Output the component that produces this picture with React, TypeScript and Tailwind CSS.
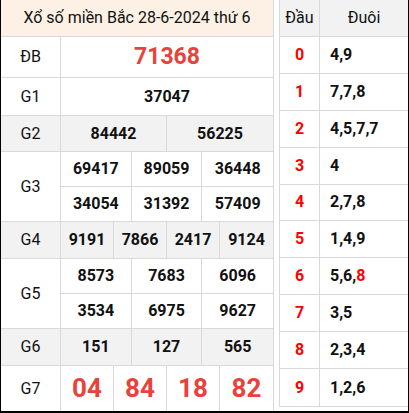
import * as React from 'react';

const RED = 'text-[#e8433a]';

type Row = { label: string; cols: number; values: string[]; h: string; gray?: boolean; big?: 'db' | 'g7' };

const rows: Row[] = [
  { label: 'ĐB', cols: 1, values: ['71368'], h: 'h-[41px]', big: 'db' },
  { label: 'G1', cols: 1, values: ['37047'], h: 'h-[38px]' },
  { label: 'G2', cols: 2, values: ['84442', '56225'], h: 'h-[36px]', gray: true },
  { label: 'G3', cols: 3, values: ['69417', '89059', '36448', '34054', '31392', '57409'], h: 'h-[70px]' },
  { label: 'G4', cols: 4, values: ['9191', '7866', '2417', '9124'], h: 'h-[37px]', gray: true },
  { label: 'G5', cols: 3, values: ['8573', '7683', '6096', '3534', '6975', '9627'], h: 'h-[70px]' },
  { label: 'G6', cols: 3, values: ['151', '127', '565'], h: 'h-[37px]', gray: true },
  { label: 'G7', cols: 4, values: ['04', '84', '18', '82'], h: 'h-[45px]', big: 'g7' },
];

const gridCols: Record<number, string> = {
  1: 'grid-cols-1',
  2: 'grid-cols-2',
  3: 'grid-cols-3',
  4: 'grid-cols-4',
};

const loto: { d: string; t: React.ReactNode }[] = [
  { d: '0', t: '4,9' },
  { d: '1', t: '7,7,8' },
  { d: '2', t: '4,5,7,7' },
  { d: '3', t: '4' },
  { d: '4', t: '2,7,8' },
  { d: '5', t: '1,4,9' },
  { d: '6', t: <>5,6,<span className="text-[#ff0000]">8</span></> },
  { d: '7', t: '3,5' },
  { d: '8', t: '2,3,4' },
  { d: '9', t: '1,2,6' },
];

export default function App() {
  return (
    <div className="w-[409px] h-[413px] bg-white border-l border-r border-b-2 border-black flex font-['Roboto',sans-serif] text-[#111]">
      {/* ket qua */}
      <div className="w-[273px] h-[411px] border-r border-[#d9d9d9] flex flex-col">
        <div className="h-[37px] bg-[#fdf1e5] border-b border-[#d9d9d9] flex items-center justify-center text-[16px]">
          Xổ số miền Bắc 28-6-2024 thứ 6
        </div>
        {rows.map((r, i) => (
          <div
            key={r.label}
            className={`${r.h} flex ${i < rows.length - 1 ? 'border-b border-[#d9d9d9]' : ''} ${r.gray ? 'bg-[#f2f2f2]' : ''}`}
          >
            <div className="w-[60px] border-r border-[#d9d9d9] flex items-center justify-center text-[16px]">
              {r.label}
            </div>
            <div className={`flex-1 grid ${gridCols[r.cols]} ${r.values.length > r.cols ? 'grid-rows-2' : ''}`}>
              {r.values.map((v, j) => {
                const lastCol = (j + 1) % r.cols === 0;
                const topRow = r.values.length > r.cols && j < r.cols;
                return (
                  <div
                    key={j}
                    className={`flex items-center justify-center font-bold ${lastCol ? '' : 'border-r border-[#d9d9d9]'} ${topRow ? 'border-b border-[#d9d9d9]' : ''} ${
                      r.big === 'db' ? `${RED} text-[23px]` : r.big === 'g7' ? `${RED} text-[26px]` : 'text-[16px]'
                    }`}
                  >
                    {v}
                  </div>
                );
              })}
            </div>
          </div>
        ))}
      </div>

      {/* dau duoi */}
      <div className="ml-[5px] flex-1 h-[407px] border-l border-b border-[#d9d9d9] flex flex-col">
        <div className="h-[37px] bg-[#f2f2f2] border-b border-[#d9d9d9] flex text-[16px]">
          <div className="w-[40px] border-r border-[#d9d9d9] flex items-center justify-center">Đầu</div>
          <div className="flex-1 flex items-center justify-center">Đuôi</div>
        </div>
        {loto.map((l, i) => (
          <div key={l.d} className={`h-[37px] flex ${i < loto.length - 1 ? 'border-b border-[#d9d9d9]' : ''}`}>
            <div className="w-[40px] border-r border-[#d9d9d9] flex items-center justify-center font-bold text-[16px] text-[#ff0000]">
              {l.d}
            </div>
            <div className="flex-1 flex items-center pl-[10px] font-bold text-[16px]">{l.t}</div>
          </div>
        ))}
      </div>
    </div>
  );
}
